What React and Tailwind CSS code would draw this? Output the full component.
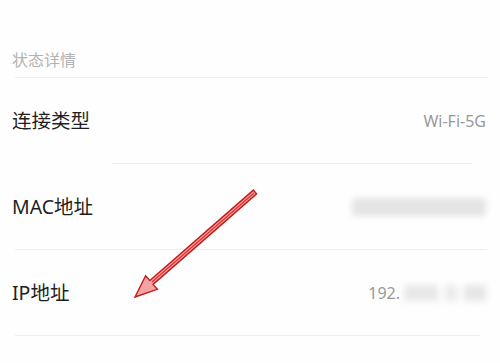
import React from "react";

const Row = ({ label, children }) => (
  <div className="flex h-[85px] items-center justify-between pl-[12px] pr-[14px]">
    <span className="text-[19.5px] text-[#1f1f1f]">{label}</span>
    {children}
  </div>
);

const Divider = ({ className = "" }) => (
  <div className={`h-px bg-[#efefef] ${className}`}></div>
);

export default function App() {
  return (
    <div
      className="relative h-[363px] w-[500px] overflow-hidden bg-[#fefefe]"
      style={{ fontFamily: '"Noto Sans", "Noto Sans CJK SC", sans-serif' }}
    >
      <div className="flex h-[77px] items-end pb-[6px] pl-[12px]">
        <span className="text-[16px] leading-[22px] text-[#b3b3b3]">状态详情</span>
      </div>
      <Divider className="ml-[15px] mr-[12px]" />

      <Row label="连接类型">
        <span className="text-[16px] text-[#999999]">Wi-Fi-5G</span>
      </Row>
      <Divider className="ml-[112px] mr-[28px]" />

      <Row label="MAC地址">
        <div className="h-[18px] w-[134px] rounded-sm bg-[#e4e4e4] blur-[3px]"></div>
      </Row>
      <Divider className="ml-[15px] mr-[13px]" />

      <Row label="IP地址">
        <div className="flex items-center">
          <span className="text-[16px] text-[#999999]">192.</span>
          <div className="ml-[4px] flex h-[16px] w-[82px] gap-[6px] blur-[3px]">
            <div className="h-full w-[34px] bg-[#e8e8e8]"></div>
            <div className="h-full w-[14px] bg-[#ececec]"></div>
            <div className="h-full w-[22px] bg-[#e6e6e6]"></div>
          </div>
        </div>
      </Row>
      <Divider className="ml-[15px] mr-[20px]" />

      <svg
        className="pointer-events-none absolute left-0 top-0"
        width="500"
        height="363"
        viewBox="0 0 500 363"
      >
        <polygon
          points="135,297 157.4,289.3 153.1,284.4 256.6,193.9 253.4,190.1 149.9,280.6 145.6,275.7"
          fill="#f3a3a3"
          stroke="#c41a1a"
          strokeWidth="1.4"
          strokeLinejoin="miter"
        />
        <line x1="152" y1="282" x2="254" y2="193" stroke="#e03030" strokeWidth="1.2" />
      </svg>
    </div>
  );
}
